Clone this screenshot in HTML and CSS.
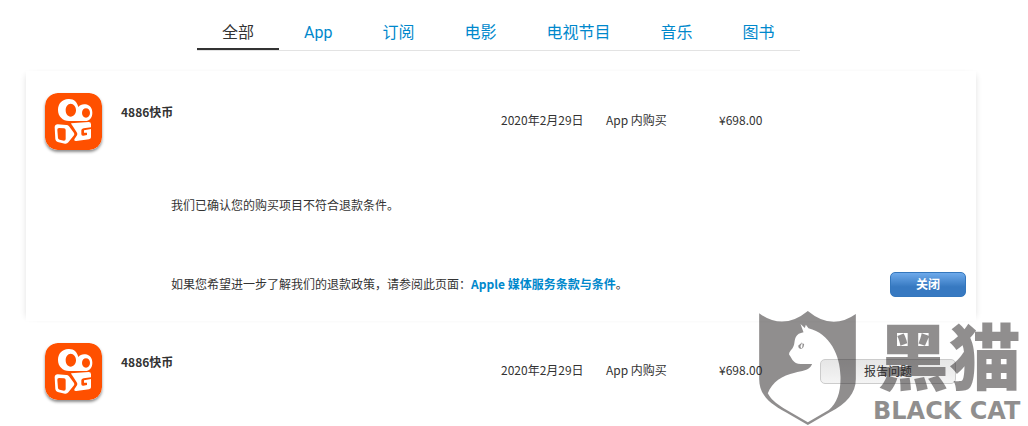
FILE: index.html
```html
<!DOCTYPE html>
<html lang="zh-CN">
<head>
    <meta charset="UTF-8">
    <meta name="viewport" content="width=device-width, initial-scale=1.0">
    <title>报告问题</title>
    <link rel="stylesheet" href="styles.css">
</head>
<body>
    <svg class="symbols" aria-hidden="true">
        <symbol id="kuaishou" viewBox="0 0 171 171">
            <rect width="171" height="171" rx="38" fill="#ff5000"/>
            <path fill="#fff" fill-rule="evenodd" d="M70 18C87 17 97 28 100 42C105 36 112 33 121 34C135 36 142 46 142 59C142 74 134 84 120 84H72C53 84 39 70 39 51C39 32 51 19 70 18ZM77 32C68 32 62 41 62 52C62 63 68 71 77 71C86 71 93 63 93 52C93 41 86 32 77 32ZM123 46C116 46 111 52 111 60C111 68 116 74 123 74C130 74 135 68 135 60C135 52 130 46 123 46Z"/>
            <path fill="#fff" fill-rule="evenodd" d="M38 94L64 96Q69 96 72 100L87 120Q89 124 87 127L70 148Q66 153 60 152L38 147Q32 145 31 139L29 102Q30 94 38 94ZM42 105Q37 105 37 110L39 135Q39 139 44 140L57 143Q62 143 62 138V111Q62 106 57 106Z"/>
            <path fill="#fff" d="M78 91L131 87Q138 87 138 94V103L116 106Q109 107 109 112V123Q109 129 115 128L126 126V119H117V112L138 108V133Q138 138 132 139L94 144Q86 145 88 139L96 127Q98 123 96 119L85 102Q78 93 78 91Z"/>
        </symbol>
    </svg>

    <div class="page">
        <nav class="tabs">
            <a href="#" class="active">全部</a>
            <a href="#">App</a>
            <a href="#">订阅</a>
            <a href="#">电影</a>
            <a href="#">电视节目</a>
            <a href="#">音乐</a>
            <a href="#">图书</a>
        </nav>

        <main class="purchases">
            <section class="purchase open">
                <div class="summary">
                    <svg class="app-icon" role="img" aria-label="快手"><use href="#kuaishou"/></svg>
                    <h2>4886快币</h2>
                    <span>2020年2月29日</span>
                    <span>App 内购买</span>
                    <span>¥698.00</span>
                </div>
                <div class="result">
                    <p>我们已确认您的购买项目不符合退款条件。</p>
                    <div class="policy">
                        <p>如果您希望进一步了解我们的退款政策，请参阅此页面：<a href="#">Apple 媒体服务条款与条件</a>。</p>
                        <button type="button" class="btn-close">关闭</button>
                    </div>
                </div>
            </section>

            <section class="purchase">
                <div class="summary">
                    <svg class="app-icon" role="img" aria-label="快手"><use href="#kuaishou"/></svg>
                    <h2>4886快币</h2>
                    <span>2020年2月29日</span>
                    <span>App 内购买</span>
                    <span>¥698.00</span>
                    <button type="button" class="btn-report">报告问题</button>
                </div>
            </section>
        </main>

        <div class="watermark">
            <svg class="shield" viewBox="28 18 290 342" aria-hidden="true">
                <path fill="currentColor" fill-rule="evenodd" d="M28 25Q101 78 174 18Q246 78 318 27V222C318 265 290 296 240 322L174 360L108 322C60 296 28 270 28 222ZM152 57L161 82C150 84 142 88 138 96C132 108 136 120 127 131C120 139 117 143 118 149C123 154 125 163 133 170C142 180 165 176 187 177C177 199 155 197 135 203C97 212 67 230 54 265C62 281 78 296 104 311L174 352L237 315C262 294 273 260 272 215C271 150 240 86 176 70L168 59L165 69Z"/>
                <path fill="currentColor" d="M145 122L157 112L154 119Q150 122 153 128L157 132Q150 132 147 129ZM158 114L163 118L161 126L156 131Q159 121 158 114Z"/>
            </svg>
            <div class="brand">
                <span class="brand-cn">黑猫</span>
                <span class="brand-en">BLACK CAT</span>
            </div>
        </div>
    </div>
</body>
</html>
```

FILE: styles.css
```css
* {
    box-sizing: border-box;
}
body {
    margin: 0;
    background-color: #fff;
    color: #333;
    font-family: "Noto Sans CJK SC", sans-serif;
    font-size: 12px;
    line-height: 18px;
}
h2, p {
    margin: 0;
}
a {
    color: #0088cc;
    text-decoration: none;
}
.symbols {
    position: absolute;
    width: 0;
    height: 0;
}
.page {
    position: relative;
    min-height: 100vh;
    padding: 16px 52px 0 26px;
}

/* Tabs */
.tabs {
    display: flex;
    width: fit-content;
    margin-left: 171px;
    border-bottom: 1px solid #e3e3e3;
}
.tabs a {
    height: 34px;
    padding: 0 25px;
    font-family: Roboto, "Noto Sans CJK SC", sans-serif;
    font-size: 16px;
    line-height: 34px;
}
.tabs .active {
    color: #333;
    border-bottom: 2px solid #333;
}

/* Purchases */
.purchases {
    margin-top: 20px;
}
.purchase {
    padding: 22px 10px 24px 19px;
}
.purchase.open {
    box-shadow: -4px 0 6px -4px rgba(0, 0, 0, 0.12), 4px 0 6px -4px rgba(0, 0, 0, 0.12);
}
.summary {
    display: grid;
    grid-template-columns: 57px 361px 86px 94px 82px 136px;
    column-gap: 19px;
    align-items: center;
    height: 57px;
}
.summary span {
    padding-bottom: 4px;
}
.app-icon {
    width: 57px;
    height: 57px;
    border-radius: 13px;
    box-shadow: 0 2px 3px rgba(0, 0, 0, 0.45);
}
.summary h2 {
    padding-bottom: 20px;
    font-size: 12px;
    line-height: 18px;
}
.result {
    padding: 46px 0 0 126px;
}
.policy {
    display: flex;
    justify-content: space-between;
    align-items: center;
    margin-top: 58px;
}
.policy p {
    padding-bottom: 2px;
}
.policy a {
    font-weight: bold;
}
button {
    height: 25px;
    padding: 0 0 2px;
    border-radius: 5px;
    font-family: inherit;
    font-size: 12px;
    line-height: 18px;
}
.btn-close {
    width: 76px;
    border: 1px solid #3477bd;
    background: linear-gradient(#6eaaeb, #3779c1 60%);
    color: #fff;
    font-weight: bold;
}
.btn-report {
    border: 1px solid #ccc;
    background: linear-gradient(#e6e6e6, #f4f4f4);
    color: #333;
}

/* Watermark */
.watermark {
    position: absolute;
    right: 3px;
    bottom: 1px;
    display: flex;
    align-items: flex-end;
    gap: 17px;
    color: #231f20;
    opacity: 0.5;
    pointer-events: none;
}
.shield {
    width: 97px;
    height: 114px;
}
.brand {
    display: flex;
    flex-direction: column;
    width: 152px;
    font-weight: 900;
}
.brand-cn {
    margin-bottom: 8px;
    font-size: 72px;
    line-height: 72px;
    text-align: center;
}
.brand-en {
    font-family: "DejaVu Sans", sans-serif;
    font-size: 24px;
    line-height: 28px;
    white-space: nowrap;
}
```
